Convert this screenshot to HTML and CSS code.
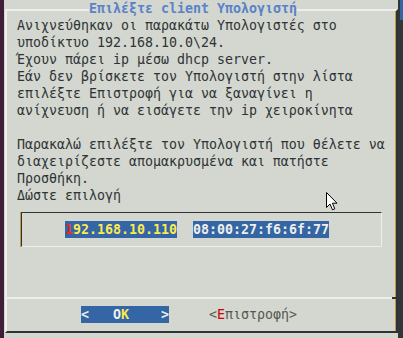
FILE: index.html
```
<!DOCTYPE html>
<html lang="el">
<head>
    <meta charset="UTF-8">
    <title>Επιλέξτε client Υπολογιστή</title>
    <link rel="stylesheet" href="styles.css">
</head>
<body>
    <div class="dialog">
        <div class="title">Επιλέξτε client Υπολογιστή</div>

        <div class="message">Ανιχνεύθηκαν οι παρακάτω Υπολογιστές στο<br>υποδίκτυο 192.168.10.0\24.<br>Έχουν πάρει ip μέσω dhcp server.<br>Εάν δεν βρίσκετε τον Υπολογιστή στην λίστα<br>επιλέξτε Επιστροφή για να ξαναγίνει η<br>ανίχνευση ή να εισάγετε την ip χειροκίνητα<br><br>Παρακαλώ επιλέξτε τον Υπολογιστή που θέλετε να<br>διαχειρίζεστε απομακρυσμένα και πατήστε<br>Προσθήκη.<br>Δώστε επιλογή</div>

        <!-- menu list -->
        <div class="menu">
            <div class="item">
                <span class="hl ip"><span class="hot">1</span>92.168.10.110</span>
                <span class="hl mac">08:00:27:f6:6f:77</span>
            </div>
        </div>

        <div class="sep"></div>

        <div class="buttons">
            <span class="btn btn-active">&lt;   O<span class="key">K</span>    &gt;</span>
            <span class="btn">&lt;<span class="hot">Ε</span>πιστροφή&gt;</span>
        </div>
    </div>

    <svg class="cursor" width="12" height="19" viewBox="0 0 12 19">
        <path d="M0.5 0.5 L0.5 15.5 L4 12 L6.5 17.8 L8.8 16.8 L6.4 11.2 L11 11.2 Z" fill="#ffffff" stroke="#000000" stroke-width="1"/>
    </svg>
</body>
</html>
```

FILE: styles.css
```
* {
    margin: 0;
    padding: 0;
    box-sizing: border-box;
}

body {
    width: 403px;
    height: 338px;
    overflow: hidden;
    position: relative;
    font-family: "DejaVu Sans Mono", "Liberation Mono", monospace;
    font-size: 13.29px;
    line-height: 17px;
    color: #2e3436;
    background:
        linear-gradient(#3465a4, #3465a4) right top / 3px 20px no-repeat,
        linear-gradient(to right, #3f1f38 4px, #d3d7cf 4px, #d3d7cf 398px, #30363a 398px);
}

.dialog {
    width: 393px;
    margin: 9px 0 0 5px;
    padding-bottom: 8px;
    border-top: 2px solid #eeeeec;
    border-left: 2px solid #eeeeec;
    border-right: 2px solid #2e3436;
    border-bottom: 2px solid #2e3436;
    box-shadow: inset -1px 0 0 #c49a3c;
}

.title {
    width: max-content;
    margin: -11px 0 0 82px;
    background: #d3d7cf;
    color: #5a82c8;
    font-weight: bold;
}

.message {
    padding-left: 10px;
    white-space: pre;
}

.menu {
    width: 361px;
    height: 35px;
    margin: 8px 0 0 14px;
    padding: 8px 0 0 43px;
    border-top: 1px solid #2e3436;
    border-left: 1px solid #2e3436;
    border-right: 1px solid #eeeeec;
    border-bottom: 1px solid #eeeeec;
    box-shadow: -1px 0 0 #c49a3c;
}

.item {
    display: flex;
    gap: 16px;
    height: 17px;
}

.hl {
    display: block;
    height: 17px;
    background: #3465a4;
    font-weight: bold;
    white-space: pre;
}

.ip {
    color: #fce94f;
}

.ip .hot {
    color: #ef2929;
}

.mac {
    color: #eeeeec;
}

.sep {
    height: 2px;
    margin-top: 50px;
    background: linear-gradient(to right, #eeeeec calc(100% - 4px), #2e3436 0);
}

.buttons {
    display: flex;
    gap: 40px;
    height: 17px;
    margin-top: 7px;
    padding-left: 74px;
}

.btn {
    display: block;
    height: 17px;
    white-space: pre;
    color: #555753;
}

.btn .hot {
    color: #cc0000;
}

.btn-active {
    background: #3465a4;
    color: #eeeeec;
    font-weight: bold;
}

.btn-active .key {
    color: #fce94f;
}

.cursor {
    position: absolute;
    left: 326px;
    top: 192px;
}
```
